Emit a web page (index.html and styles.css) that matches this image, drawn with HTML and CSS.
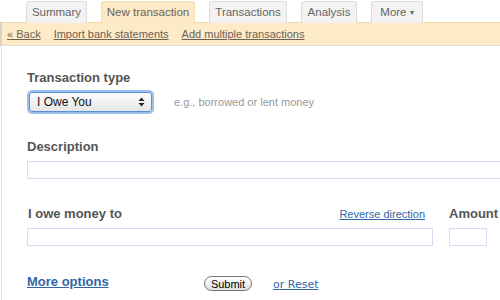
FILE: index.html
```html
<!DOCTYPE html>
<html lang="en">
<head>
    <meta charset="UTF-8">
    <title>New transaction</title>
    <link rel="stylesheet" href="styles.css">
</head>
<body>
    <div class="tabs">
        <a class="tab">Summary</a>
        <a class="tab active">New transaction</a>
        <a class="tab">Transactions</a>
        <a class="tab">Analysis</a>
        <a class="tab">More <span class="caret">&#9662;</span></a>
    </div>
    <div class="subbar">
        <a href="#">&laquo; Back</a>
        <a href="#">Import bank statements</a>
        <a href="#">Add multiple transactions</a>
    </div>
    <div class="page">
        <div class="field">
            <h3>Transaction type</h3>
            <div class="type-row">
                <div class="select">
                    <span>I Owe You</span>
                    <svg width="7" height="10" viewBox="0 0 7 10"><path d="M3.5 0.5 L6.5 4 L0.5 4 Z M0.5 6 L6.5 6 L3.5 9.5 Z" fill="#222"/></svg>
                </div>
                <span class="hint">e.g., borrowed or lent money</span>
            </div>
        </div>
        <div class="field">
            <h3>Description</h3>
            <input type="text" class="wide">
        </div>
        <div class="field who">
            <div class="who-main">
                <div class="who-head">
                    <h3>I owe money to</h3>
                    <a href="#" class="reverse">Reverse direction</a>
                </div>
                <input type="text" class="person">
            </div>
            <div class="who-amount">
                <h3>Amount</h3>
                <input type="text" class="amount">
            </div>
        </div>
        <div class="actions">
            <a href="#" class="more">More options</a>
            <button class="submit">Submit</button>
            <a href="#" class="reset">or Reset</a>
        </div>
    </div>
</body>
</html>
```
FILE: styles.css
```css
body{
    margin: 0;
    font-family: "Liberation Sans", Arial, sans-serif;
    background: #fff;
    overflow: hidden;
    height: 300px;
}
.tabs{
    display: flex;
    gap: 14px;
    padding: 1px 0 0 26px;
    height: 21px;
}
.tab{
    box-sizing: border-box;
    height: 22px;
    padding: 4px 0 0;
    font-size: 11.5px;
    white-space: nowrap;
    color: #666;
    background: #f2f2f2;
    border: 1px solid #dcdcdc;
    border-bottom: 0;
    border-radius: 3px 3px 0 0;
    text-align: center;
}
.tab:nth-child(1){ width: 61px; }
.tab:nth-child(2){ width: 94px; }
.tab:nth-child(3){ width: 78px; }
.tab:nth-child(4){ width: 56px; }
.tab:nth-child(5){ width: 52px; }
.tab.active{
    background: #fde9c3;
    border-color: #f2dcb4;
    position: relative;
    height: 23px;
    z-index: 1;
}
.caret{
    font-size: 8px;
    vertical-align: 1px;
}
.subbar{
    display: flex;
    gap: 13px;
    height: 22px;
    align-items: center;
    padding-left: 5px;
    background: #fdebc8;
    border-top: 1px solid #f0d9ae;
    border-bottom: 1px solid #e6e0d4;
    border-left: 2px solid #d8d3c8;
}
.subbar a{
    font-size: 11px;
    color: #6b6355;
}
.page{
    box-sizing: border-box;
    border-left: 1px solid #e2e2e2;
    margin-left: 1px;
    padding: 24px 0 0 25px;
    height: 260px;
}
.field h3{
    margin: 0 0 7px;
    font-size: 13px;
    color: #555;
}
.type-row{
    display: flex;
    align-items: center;
    gap: 22px;
}
.select{
    box-sizing: border-box;
    width: 123px;
    height: 20px;
    margin-left: 2px;
    display: flex;
    align-items: center;
    justify-content: space-between;
    padding: 0 6px 0 7px;
    font-size: 12px;
    color: #111;
    border: 1px solid #5a8fd0;
    border-radius: 3px;
    background: linear-gradient(#fdfdfd, #e6e6e6);
    box-shadow: 0 0 0 2px #9cc0ec;
}
.hint{
    font-size: 11px;
    color: #999;
}
.field{
    margin-bottom: 27px;
}
input{
    box-sizing: border-box;
    height: 18px;
    border: 1px solid #dcdaf3;
    background: #fff;
    margin: 0;
}
.wide{
    width: 480px;
    display: block;
}
.who{
    display: flex;
    gap: 16px;
}
.who-head{
    display: flex;
    justify-content: space-between;
    align-items: baseline;
    margin-bottom: 7px;
}
.who-head h3{
    margin: 0 0 0 1px;
}
.reverse{
    font-size: 11px;
    color: #2f66a8;
    margin-right: 8px;
}
.person{
    width: 406px;
    display: block;
}
.amount{
    width: 38px;
    display: block;
}
.actions{
    display: flex;
    align-items: center;
    margin-top: -1px;
}
.more{
    font-size: 13px;
    font-weight: bold;
    color: #2f66a8;
    width: 177px;
}
.submit{
    box-sizing: border-box;
    width: 48px;
    height: 15px;
    padding: 0;
    font-family: "Liberation Sans", Arial, sans-serif;
    font-size: 11px;
    color: #000;
    border: 1px solid #777;
    border-radius: 8px;
    background: linear-gradient(#fff, #e0e0e0);
    margin-top: 4px;
}
.reset{
    margin: 6px 0 0 21px;
    font-family: "DejaVu Sans", sans-serif;
    font-size: 11px;
    color: #2f66a8;
}
```
